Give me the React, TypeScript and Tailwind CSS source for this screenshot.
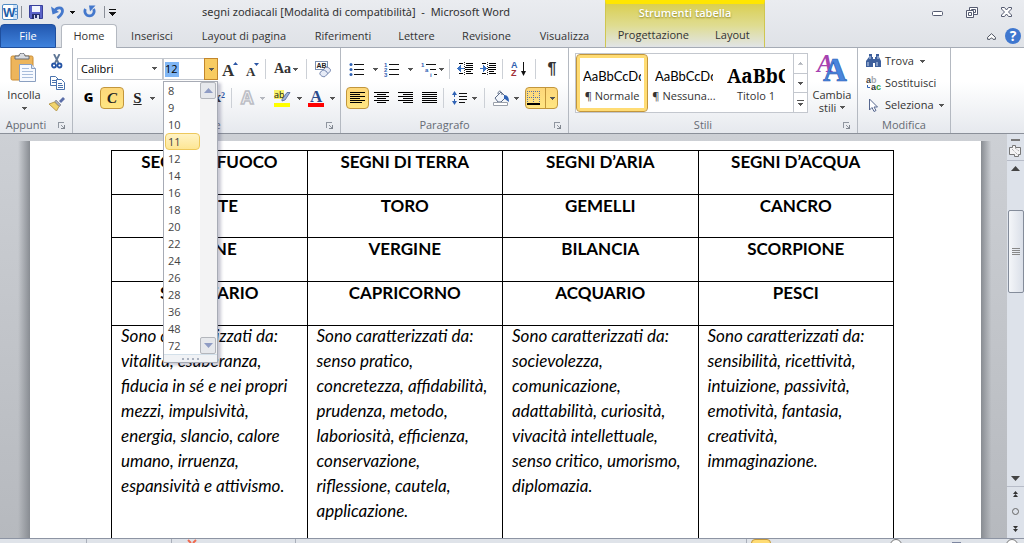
import type { ReactNode } from 'react';

const fileTabs = [
  { label: 'Inserisci', width: 'w-[70px]' },
  { label: 'Layout di pagina', width: 'w-[114px]' },
  { label: 'Riferimenti', width: 'w-[84px]' },
  { label: 'Lettere', width: 'w-[63px]' },
  { label: 'Revisione', width: 'w-[77px]' },
  { label: 'Visualizza', width: 'w-[79px]' },
];

const sizes = [8, 9, 10, 11, 12, 14, 16, 18, 20, 22, 24, 26, 28, 36, 48, 72];

const signRows = [
  { height: 'h-[44px]', cells: ['SEGNI DI FUOCO', 'SEGNI DI TERRA', 'SEGNI D’ARIA', 'SEGNI D’ACQUA'] },
  { height: 'h-[43px]', cells: ['ARIETE', 'TORO', 'GEMELLI', 'CANCRO'] },
  { height: 'h-[44px]', cells: ['LEONE', 'VERGINE', 'BILANCIA', 'SCORPIONE'] },
  { height: 'h-[44px]', cells: ['SAGITTARIO', 'CAPRICORNO', 'ACQUARIO', 'PESCI'] },
];

const traits = [
  ['Sono caratterizzati da:', 'vitalità, esuberanza,', 'fiducia in sé e nei propri', 'mezzi, impulsività,', 'energia, slancio, calore', 'umano, irruenza,', 'espansività e attivismo.'],
  ['Sono caratterizzati da:', 'senso pratico,', 'concretezza, affidabilità,', 'prudenza, metodo,', 'laboriosità, efficienza,', 'conservazione,', 'riflessione, cautela,', 'applicazione.'],
  ['Sono caratterizzati da:', 'socievolezza,', 'comunicazione,', 'adattabilità, curiosità,', 'vivacità intellettuale,', 'senso critico, umorismo,', 'diplomazia.'],
  ['Sono caratterizzati da:', 'sensibilità, ricettività,', 'intuizione, passività,', 'emotività, fantasia,', 'creatività,', 'immaginazione.'],
];

function Caret({ color = '#555' }: { color?: string }) {
  return (
    <svg width="5" height="3" viewBox="0 0 5 3" className="shrink-0" shapeRendering="crispEdges">
      <path d="M0 0h5v1h-1v1h-1v1h-1v-1h-1v-1h-1z" fill={color} />
    </svg>
  );
}

function Divider() {
  return <span className="h-5 w-px shrink-0 bg-[#ccd0d6]" />;
}

function Tool({ label, width, active, children }: { label: string; width: string; active?: boolean; children?: ReactNode }) {
  return (
    <button
      aria-label={label}
      className={`flex h-[22px] shrink-0 items-center justify-center gap-2 rounded-sm ${width} ${
        active ? 'border border-[#c2963c] bg-linear-to-b from-[#fdd77a] to-[#ffe682]' : ''
      }`}
    >
      {children}
    </button>
  );
}

function Group({ title, width, launcher = true, children }: { title: string; width: string; launcher?: boolean; children: ReactNode }) {
  return (
    <section className={`flex shrink-0 flex-col border-r border-[#b4b9c1] ${width}`}>
      <div className="h-[69px]">{children}</div>
      <div className={`relative h-4 text-center leading-4 text-[#666b74] ${launcher ? 'pr-5' : ''}`}>
        {title}
        {launcher && (
          <button aria-label={`Opzioni ${title}`} className="absolute top-[5px] right-[6px]">
            <svg width="8" height="8" viewBox="0 0 8 8" shapeRendering="crispEdges">
              <path d="M0.5 6V0.5H6M3 3l3 3" fill="none" stroke="#9096a0" />
              <path d="M7 3v4H3V6h3V3z" fill="#80868f" />
            </svg>
          </button>
        )}
      </div>
    </section>
  );
}

function Lines({ rows }: { rows: [number, number][] }) {
  return (
    <svg width="15" height="14" viewBox="0 0 15 14" shapeRendering="crispEdges">
      {rows.map(([x, w], i) => (
        <rect key={i} x={x} y={1 + i * 2} width={w} height="1" fill="#000" />
      ))}
    </svg>
  );
}

function Indent({ right }: { right?: boolean }) {
  return (
    <svg width="17" height="14" viewBox="0 0 17 14" shapeRendering="crispEdges">
      <path d="M7.500 0v14" stroke="#333" strokeDasharray="1 1" />
      <path d="M2 1.500h4M9 1.500h7M9 3.500h7M8 5.500h8M8 7.500h8M9 9.500h5M2 11.500h4M9 11.500h7" stroke="#000" fill="none" />
      <path d={right ? 'M0 6h3V3l4 3.500L3 10V7H0z' : 'M7 6H4V3L0 6.500 4 10V7h3z'} fill="#3c73c4" />
    </svg>
  );
}

function WordLogo() {
  return (
    <svg width="16" height="17" viewBox="0 0 16 17" className="shrink-0">
      <rect x="0.500" y="0.500" width="15" height="15" rx="1.500" fill="#fff" stroke="#4f8ac4" />
      <path d="M11 1h4v14h-4z" fill="#cfe2f6" />
      <path d="M13 4.500h2M13 7.500h2M13 10.500h2" stroke="#5d8fcd" />
      <text x="1" y="13" fontSize="13" fontWeight="bold" fill="#1f5ea8" fontFamily="Liberation Sans, sans-serif">W</text>
    </svg>
  );
}

function TitleBar() {
  return (
    <div className="flex h-6 shrink-0 items-center">
      <div className="flex w-[202px] shrink-0 items-center pl-[2px]">
        <WordLogo />
        <span className="ml-[3px] h-3 w-px bg-[#8a8f98]" />
        <button aria-label="Salva" className="ml-[7px]">
          <svg width="14" height="14" viewBox="0 0 14 14">
            <path d="M0.500 0.500h13v13h-12l-1-1z" fill="#5a63c8" stroke="#38409a" />
            <path d="M3 1h8v6H3z" fill="#f2f6fd" />
            <path d="M3 9h8v5H3z" fill="#26306c" />
            <path d="M5 10h5v4H5z" fill="#d6dcf0" />
            <path d="M6 10h2v3H6z" fill="#26306c" />
          </svg>
        </button>
        <button aria-label="Annulla" className="ml-2 flex items-center gap-[6px]">
          <svg width="13" height="14" viewBox="0 0 13 14">
            <path d="M4 5.500c2-3.500 7.500-3.500 7.500 0.500 0 3-2 4.500-5 7" fill="none" stroke="#4478cc" strokeWidth="2.800" />
            <path d="M0 1.500l1.500 8L8 7z" fill="#4478cc" />
          </svg>
          <Caret color="#111" />
        </button>
        <button aria-label="Ripeti" className="ml-2">
          <svg width="13" height="14" viewBox="0 0 13 14">
            <path d="M2.500 4a4.600 4.600 0 1 0 8 0" fill="none" stroke="#4478cc" strokeWidth="2.800" />
            <path d="M6 0.500l6.500 0L7 6.500z" fill="#4478cc" />
          </svg>
        </button>
        <span className="ml-2 h-3 w-px bg-[#8a8f98]" />
        <button aria-label="Personalizza" className="ml-1">
          <svg width="7" height="7" viewBox="0 0 7 7" shapeRendering="crispEdges">
            <path d="M0 0h7v1H0zM0 3h7L3.500 7z" fill="#111" />
          </svg>
        </button>
      </div>
      <h1 className="font-['Noto_Sans',sans-serif] whitespace-pre text-[#333]">segni zodiacali [Modalità di compatibilità]  -  Microsoft Word</h1>
    </div>
  );
}

function Header() {
  return (
    <header className="flex h-12 shrink-0 bg-linear-to-b from-[#eaecf0] to-[#dfe2e7] shadow-[inset_0_-1px_0_#a5abb5]">
      <div className="flex w-[605px] shrink-0 flex-col">
        <TitleBar />
        <nav className="flex h-6 items-stretch text-[#333]">
          <button className="mr-[5px] w-14 rounded-t-sm border border-[#1f4f9e] bg-linear-to-b from-[#2358b0] to-[#3f82dc] text-white">File</button>
          <button className="w-[56px] rounded-t-sm border border-b-0 border-[#b4b9c1] bg-white">Home</button>
          {fileTabs.map((tab) => (
            <button key={tab.label} className={`shrink-0 whitespace-nowrap ${tab.width}`}>
              {tab.label}
            </button>
          ))}
        </nav>
      </div>
      <div className="flex w-40 shrink-0 flex-col border-x border-t-4 border-b border-x-[#cfc650] border-t-[#ffe600] border-b-[#a5abb5] bg-linear-to-b from-[#dacf4e] via-[#dfdc90] to-[#e1e4e6]">
        <div className="h-5 shrink-0 text-center leading-[18px] font-semibold text-white [text-shadow:0_1px_2px_#8a8320]">Strumenti tabella</div>
        <nav className="flex flex-1 text-[#333]">
          <button className="w-[96px]">Progettazione</button>
          <button className="w-[64px]">Layout</button>
        </nav>
      </div>
      <div className="flex flex-1 flex-col items-end">
        <div className="flex h-6 items-center gap-[23px] pr-3">
          <button aria-label="Riduci a icona">
            <svg width="11" height="10" viewBox="0 0 11 10"><rect x="0.500" y="4.500" width="10" height="4" rx="1" fill="#fff" stroke="#555b70" /></svg>
          </button>
          <button aria-label="Ripristina">
            <svg width="12" height="11" viewBox="0 0 12 11" fill="#fff" stroke="#555b70">
              <path d="M3.500 0.500h8v7h-8z" />
              <path d="M5.500 2.500h4v3h-4z" />
              <path d="M0.500 3.500h7v7h-7z" />
              <path d="M2.500 5.500h3v3h-3z" />
            </svg>
          </button>
          <button aria-label="Chiudi">
            <svg width="11" height="10" viewBox="0 0 11 10">
              <path d="M0.500 0.500h3l2 2.500 2-2.500h3v1.500L7.500 5l3 3v1.500h-3l-2-2.500-2 2.500h-3V8l3-3-3-3z" fill="#fff" stroke="#555b70" />
            </svg>
          </button>
        </div>
        <div className="flex h-6 items-center gap-[9px] pr-[3px]">
          <button aria-label="Riduci barra multifunzione">
            <svg width="9" height="7" viewBox="0 0 9 7">
              <path d="M4.500 0.700L8.400 4.300v2H6L4.500 4.700 3 6.300H0.600v-2z" fill="#fff" stroke="#4c5260" />
            </svg>
          </button>
          <button aria-label="Guida" className="size-4 rounded-full bg-[#3f77cf] text-center text-sm leading-4 font-bold text-white">?</button>
        </div>
      </div>
    </header>
  );
}

function Clipboard() {
  return (
    <div className="flex h-full">
      <button className="flex w-[48px] flex-col items-center justify-start pt-[5px]">
        <svg width="28" height="30" viewBox="0 0 28 30" className="shrink-0">
          <rect x="1" y="3" width="22" height="24" rx="1.500" fill="#edb55b" stroke="#c98c35" />
          <path d="M5 6V3h4c0-4 6-4 6 0h4v3z" fill="#d9dce1" stroke="#676b73" />
          <path d="M9.500 11.500h12l4 4v13h-16z" fill="#f7faff" stroke="#8a9fc0" />
          <path d="M21.500 11.500v4h4" fill="#dbe7f6" stroke="#8a9fc0" />
          <path d="M12 15.500h7M12 18.500h11M12 21.500h11M12 24.500h11" stroke="#a9bddb" />
        </svg>
        <span className="mt-[5px] leading-[14px]">Incolla</span>
        <span className="mt-[5px]"><Caret /></span>
      </button>
      <div className="flex w-[18px] flex-col items-center gap-[7px] pt-[6px]">
        <button aria-label="Taglia">
          <svg width="12" height="15" viewBox="0 0 12 15" fill="none">
            <path d="M3 0l4.500 9M8.500 0L4 9" stroke="#5f7796" strokeWidth="1.800" />
            <circle cx="3" cy="11.500" r="2" stroke="#2453a4" strokeWidth="1.800" />
            <circle cx="8.500" cy="11.500" r="2" stroke="#2453a4" strokeWidth="1.800" />
          </svg>
        </button>
        <button aria-label="Copia">
          <svg width="15" height="14" viewBox="0 0 15 14" fill="#fff" stroke="#4a73ae">
            <path d="M0.500 0.500h5l3 3v6h-8z" />
            <path d="M2 4.500h4M2 6.500h4" />
            <path d="M6.500 3.500h5l3 3v7h-8z" />
            <path d="M8 7.500h4M8 9.500h5M8 11.500h5" />
          </svg>
        </button>
        <button aria-label="Copia formato">
          <svg width="16" height="14" viewBox="0 0 16 14">
            <path d="M10 4l4-4 2 2-4 4z" fill="#5b6ea8" />
            <path d="M7 3l5 5-2 1.500L5.500 5z" fill="#a9adb8" stroke="#5e6370" strokeWidth="0.500" />
            <path d="M0 7l5.500-2L10 9.500 7.500 14z" fill="#f1d56e" stroke="#a3802a" strokeWidth="0.700" />
          </svg>
        </button>
      </div>
    </div>
  );
}

function SizeMenu() {
  return (
    <div className="absolute top-[22px] -left-px z-10 w-[55px] border border-[#a7abb5] bg-white shadow-[3px_2px_3px_rgba(70,70,110,0.3)]">
      <div className="flex">
        <ul className="flex-1 pl-px" role="listbox" aria-label="Dimensioni">
          {sizes.map((size) => (
            <li
              key={size}
              role="option"
              aria-selected={size === 11}
              className={`h-[17px] rounded-sm border pl-0.5 leading-[15px] text-[#444] ${
                size === 11 ? 'border-[#edc85c] bg-linear-to-b from-[#fff3c4] to-[#fde694]' : 'border-transparent'
              }`}
            >
              {size}
            </li>
          ))}
        </ul>
        <div className="flex w-[17px] flex-col justify-between bg-[#f3f3f4]">
          <button aria-label="Su" className="flex h-[17px] w-4 items-center justify-center rounded-xs border border-[#b3b6bc] bg-[#e6e8ec]">
            <svg width="9" height="5" viewBox="0 0 9 5"><path d="M0 5l4.500-5L9 5z" fill="#8f9cc4" /></svg>
          </button>
          <button aria-label="Giù" className="flex h-[17px] w-4 items-center justify-center rounded-xs border border-[#b3b6bc] bg-[#e6e8ec]">
            <svg width="9" height="5" viewBox="0 0 9 5"><path d="M0 0h9L4.500 5z" fill="#8f9cc4" /></svg>
          </button>
        </div>
      </div>
      <div className="flex h-2 items-center justify-center gap-[3px] border-t border-[#d3e0ea] bg-[#f0f2f5]">
        <i className="size-0.5 bg-[#a9b0be]" />
        <i className="size-0.5 bg-[#a9b0be]" />
        <i className="size-0.5 bg-[#a9b0be]" />
        <i className="size-0.5 bg-[#a9b0be]" />
      </div>
    </div>
  );
}

function FontTools() {
  return (
    <div className="flex flex-col gap-[7px] pt-[10px] pl-1">
      <div className="flex h-[22px] items-center">
        <div className="relative h-[22px] w-[86px] shrink-0">
          <select aria-label="Tipo di carattere" className="h-full w-full appearance-none border border-[#c3c7ce] bg-white pl-[3px] text-black">
            <option>Calibri</option>
          </select>
          <span className="pointer-events-none absolute top-[9px] right-[6px]"><Caret /></span>
        </div>
        <div className="relative flex h-[22px] w-[55px] shrink-0 items-center border border-[#c3c7ce] bg-white pl-px">
          <input aria-label="Dimensione carattere" defaultValue="12" className="h-[15px] w-[14px] bg-[#7fb6f5] text-black outline-none" />
          <button aria-label="Apri dimensioni" className="absolute -top-px -right-px flex h-[22px] w-[14px] items-center justify-center border border-[#c2862c] bg-[#f8cb61]">
            <Caret />
          </button>
          <SizeMenu />
        </div>
        <Tool label="Ingrandisci carattere" width="w-[24px]">
          <svg width="16" height="15" viewBox="0 0 16 15" className="overflow-visible">
            <text x="0" y="14" fontSize="17" fontWeight="bold" fill="#333" fontFamily="Liberation Serif, serif">A</text>
            <path d="M11 3l2.500-3L16 3z" fill="#2a55a5" />
          </svg>
        </Tool>
        <Tool label="Riduci carattere" width="w-[22px]">
          <svg width="14" height="15" viewBox="0 0 14 15" className="overflow-visible">
            <text x="0" y="14" fontSize="13" fontWeight="bold" fill="#333" fontFamily="Liberation Serif, serif">A</text>
            <path d="M8 1h5l-2.500 3z" fill="#2a55a5" />
          </svg>
        </Tool>
        <span className="w-1" />
        <Divider />
        <Tool label="Maiuscole/minuscole" width="w-[40px]">
          <span className="-mr-1.5 font-['Liberation_Serif',serif] text-sm font-bold text-[#333]">Aa</span>
          <Caret />
        </Tool>
        <Divider />
        <Tool label="Cancella formattazione" width="w-[33px]">
          <svg width="17" height="16" viewBox="0 0 17 16" className="overflow-visible">
            <rect x="0.500" y="0.500" width="12" height="8" fill="#fff" stroke="#7c8fae" />
            <text x="1.500" y="7" fontSize="7" fontWeight="bold" fill="#222" fontFamily="Liberation Sans, sans-serif">AB</text>
            <path d="M5 11.500l5.500-5c2-1 6.500 1.500 4.500 4l-5 5c-2 1-6-1.500-5-4z" fill="#e7ecf7" stroke="#6d80ab" />
            <path d="M8 9c2 0 4 1.500 4.500 3.500" fill="none" stroke="#6d80ab" />
          </svg>
        </Tool>
      </div>
      <div className="flex h-[22px] items-center text-[#222]">
        <Tool label="Grassetto" width="w-[23px]"><b className="text-[13px] font-extrabold text-black">G</b></Tool>
        <Tool label="Corsivo" width="w-[24px]" active>
          <span className="font-['Liberation_Serif',serif] text-[15px] font-bold italic">C</span>
        </Tool>
        <Tool label="Sottolineato" width="w-[40px]">
          <span className="font-['Liberation_Serif',serif] text-[15px] font-bold underline">S</span>
          <Caret />
        </Tool>
        <Tool label="Barrato" width="w-[22px]" />
        <Tool label="Pedice" width="w-[22px]" />
        <Tool label="Apice" width="w-[23px]">
          <span className="font-['Liberation_Serif',serif] text-sm font-bold whitespace-nowrap">
            x<sup className="text-[8px] text-[#2a55a5]">2</sup>
          </span>
        </Tool>
        <Divider />
        <Tool label="Effetti testo" width="w-[40px]">
          <svg width="16" height="16" viewBox="0 0 16 16" className="-mr-1 shrink-0 overflow-visible">
            <text x="1" y="14" fontSize="18" fontWeight="bold" fill="#f5f5f7" stroke="#bcbec5" strokeWidth="1.500" fontFamily="Open Sans, sans-serif">A</text>
          </svg>
          <Caret color="#b5b8bf" />
        </Tool>
        <Tool label="Evidenziatore" width="w-[31px]">
          <svg width="17" height="17" viewBox="0 0 17 17" className="-mr-0.5 shrink-0 overflow-visible">
            <path d="M0 0h10v9H0z" fill="#f8f36b" />
            <text x="0" y="8" fontSize="9" fill="#111" fontFamily="Open Sans, sans-serif">ab</text>
            <path d="M8 9.500L13 2.500h3L11 10l-3 1z" fill="#9fb4d8" stroke="#4d6595" strokeWidth="0.800" />
            <path d="M0 13h16v4H0z" fill="#ff0" />
          </svg>
          <Caret />
        </Tool>
        <Tool label="Colore carattere" width="w-[36px]">
          <svg width="16" height="17" viewBox="0 0 16 17" className="-mr-0.5 shrink-0 overflow-visible">
            <text x="2" y="12" fontSize="17" fontWeight="bold" fill="#2c4c8c" fontFamily="Liberation Serif, serif">A</text>
            <path d="M0 13h16v4H0z" fill="#f00" />
          </svg>
          <Caret />
        </Tool>
      </div>
    </div>
  );
}

function ListIcon({ kind }: { kind: 'bullets' | 'numbers' | 'levels' }) {
  return (
    <svg width="16" height="15" viewBox="0 0 16 15" className="shrink-0 overflow-visible">
      {kind === 'levels' ? (
        <path d="M5 2.500h10M9 7.500h6M13 12.500h3" stroke="#111" shapeRendering="crispEdges" />
      ) : (
        <path d="M5 2.500h10M5 7.500h10M5 12.500h10" stroke="#111" shapeRendering="crispEdges" />
      )}
      {kind === 'bullets' && (
        <g fill="#2f62b5">
          <circle cx="2" cy="2.500" r="1.500" />
          <circle cx="2" cy="7.500" r="1.500" />
          <circle cx="2" cy="12.500" r="1.500" />
        </g>
      )}
      {kind !== 'bullets' && (
        <g fill="#2f62b5" fontSize="6" fontWeight="bold" fontFamily="Liberation Sans, sans-serif">
          <text x="0" y="5">1</text>
          <text x={kind === 'levels' ? 4 : 0} y="10">{kind === 'levels' ? 'a' : '2'}</text>
          <text x={kind === 'levels' ? 9 : 0} y="15">{kind === 'levels' ? 'i' : '3'}</text>
        </g>
      )}
    </svg>
  );
}

function ParagraphTools() {
  const full: [number, number] = [0, 15];
  return (
    <div className="flex flex-col gap-[7px] pt-[10px] pl-[5px]">
      <div className="flex h-[22px] items-center">
        <Tool label="Elenchi puntati" width="w-[35px]"><ListIcon kind="bullets" /><Caret /></Tool>
        <Tool label="Elenchi numerati" width="w-[35px]"><ListIcon kind="numbers" /><Caret /></Tool>
        <Tool label="Elenco a più livelli" width="w-[32px]"><ListIcon kind="levels" /><span className="-ml-1.5 flex"><Caret /></span></Tool>
        <span className="w-px" />
        <Divider />
        <span className="w-[5px]" />
        <Tool label="Riduci rientro" width="w-[24px]"><Indent /></Tool>
        <Tool label="Aumenta rientro" width="w-[22px]"><Indent right /></Tool>
        <span className="w-[3px]" />
        <Divider />
        <Tool label="Ordina" width="w-[32px]">
          <svg width="16" height="16" viewBox="0 0 16 16" className="overflow-visible">
            <g fontSize="9" fontWeight="bold" fontFamily="Liberation Sans, sans-serif">
              <text x="0" y="7" fill="#2f5fb0">A</text>
              <text x="0" y="15" fill="#a03038">Z</text>
            </g>
            <path d="M12.500 1v12" stroke="#111" />
            <path d="M10 10h5l-2.500 5z" fill="#111" />
          </svg>
        </Tool>
        <Divider />
        <Tool label="Mostra tutto" width="w-[32px]">
          <span className="font-['Liberation_Sans',sans-serif] text-base font-bold text-[#333]">¶</span>
        </Tool>
      </div>
      <div className="flex h-[22px] items-center">
        <Tool label="Allinea a sinistra" width="w-[23px]" active><Lines rows={[full, [0, 10], full, [0, 10], full, [0, 12]]} /></Tool>
        <Tool label="Centra" width="w-[24px]"><Lines rows={[full, [3, 9], full, [3, 9], full, [3, 9]]} /></Tool>
        <Tool label="Allinea a destra" width="w-[24px]"><Lines rows={[full, [5, 10], full, [5, 10], full, [5, 10]]} /></Tool>
        <Tool label="Giustifica" width="w-[24px]"><Lines rows={[full, full, full, full, full, full]} /></Tool>
        <span className="w-0.5" />
        <Divider />
        <Tool label="Interlinea" width="w-[40px]">
          <svg width="16" height="16" viewBox="0 0 16 16" className="-mr-1 shrink-0">
            <path d="M2.500 3v10" stroke="#2f62b5" strokeDasharray="4 2" />
            <path d="M0 5l2.500-4L5 5zM0 11h5l-2.500 4z" fill="#2f62b5" />
            <path d="M7 3.500h8M7 6.500h8M7 9.500h8M7 12.500h6" stroke="#111" shapeRendering="crispEdges" />
          </svg>
          <Caret />
        </Tool>
        <Divider />
        <Tool label="Sfondo" width="w-[40px]">
          <svg width="18" height="16" viewBox="0 0 18 16" className="-mr-1 shrink-0">
            <path d="M3 8l6-6 5 5-5 5H6z" fill="#f1f5fb" stroke="#5a6a86" />
            <path d="M6 4c0-4 4-4 4 1" fill="none" stroke="#5a6a86" />
            <path d="M12 5c4 0 5 3 5 7-2-1-3-3-5-3z" fill="#2f62b5" />
            <path d="M1.500 12.500h14v3h-14z" fill="#fff" stroke="#9aa0aa" />
          </svg>
          <Caret />
        </Tool>
        <Tool label="Bordi" width="w-[33px]" active>
          <svg width="14" height="14" viewBox="0 0 14 14" className="-ml-px shrink-0" shapeRendering="crispEdges">
            <path d="M0.500 0v12M6.500 0v12M12.500 0v12M0 0.500h13M0 6.500h13" stroke="#5a73a5" strokeDasharray="1 1" />
            <path d="M0 12h13v1.500H0z" fill="#000" />
          </svg>
          <span className="-ml-1 flex h-full items-center border-l border-[#c2963c] pl-1"><Caret /></span>
        </Tool>
      </div>
    </div>
  );
}

function StyleGallery() {
  return (
    <div className="flex pt-[5px] pl-[6px]">
      <div className="flex h-[60px] w-[233px] shrink-0 border border-[#c3c7ce] bg-white">
        <button className="flex h-full w-[72px] flex-col items-center justify-start rounded-sm border border-[#c2963c] bg-white pt-[11px] inset-ring-3 inset-ring-[#ffdc74]">
          <span className="w-[58px] overflow-hidden text-left font-['Lato',sans-serif] text-[13px] leading-5 text-black">AaBbCcDc</span>
          <span className="mt-0.5 leading-4">¶ Normale</span>
        </button>
        <button className="flex w-[72px] flex-col items-center justify-start pt-[12px]">
          <span className="w-[58px] overflow-hidden text-left font-['Lato',sans-serif] text-[13px] leading-5 text-black">AaBbCcDc</span>
          <span className="mt-0.5 leading-4 whitespace-nowrap">¶ Nessuna...</span>
        </button>
        <button className="flex w-[72px] flex-col items-center justify-start pt-[12px]">
          <span className="w-[58px] overflow-hidden text-left font-['Noto_Serif','Liberation_Serif',serif] text-[19px] leading-5 font-bold text-black">AaBbC</span>
          <span className="mt-0.5 leading-4">Titolo 1</span>
        </button>
        <div className="ml-auto flex w-[14px] flex-col border-l border-[#c3c7ce]">
          <button aria-label="Riga precedente" className="flex flex-1 rotate-180 items-center justify-center"><Caret color="#b0b4bb" /></button>
          <button aria-label="Riga successiva" className="flex flex-1 items-center justify-center border-y border-[#c3c7ce]"><Caret /></button>
          <button aria-label="Altro" className="flex flex-1 flex-col items-center justify-center gap-0.5">
            <span className="h-px w-[7px] bg-[#555]" />
            <Caret />
          </button>
        </div>
      </div>
      <button className="flex w-[48px] flex-col items-center">
        <svg width="30" height="29" viewBox="0 0 30 29" className="mt-px shrink-0 overflow-visible">
          <text x="0" y="18" fontSize="25" fontStyle="italic" fontWeight="bold" fill="#a642b0" fontFamily="Liberation Serif, serif">A</text>
          <text x="6" y="27" fontSize="33" fill="#4a86dd" stroke="#2d62b8" strokeWidth="0.700" fontWeight="bold" fontFamily="Liberation Serif, serif">A</text>
        </svg>
        <span className="mt-[5px] leading-[13px]">Cambia</span>
        <span className="flex items-center gap-1 leading-[13px]">stili <Caret /></span>
      </button>
    </div>
  );
}

function EditTools() {
  return (
    <div className="flex flex-col pt-0.5 pl-2">
      <button className="flex h-[22px] items-center">
        <svg width="16" height="14" viewBox="0 0 16 14" className="mr-[3px]">
          <path d="M3 0h3v3h1V5h2V3h1V0h3v3l2 4v6H9V9H7v4H0V7l3-4z" fill="#3d5f9c" />
          <path d="M2 8v4M11 8v4M4 2v3M12 2v3" stroke="#c9d8f0" />
        </svg>
        Trova
        <span className="ml-[6px]"><Caret /></span>
      </button>
      <button className="flex h-[22px] items-center">
        <svg width="16" height="15" viewBox="0 0 16 15" className="mr-[3px] overflow-visible">
          <g fontSize="9" fontWeight="bold" fontFamily="Liberation Sans, sans-serif">
            <text x="0" y="7" fill="#444">a</text>
            <text x="5" y="7" fill="#a5a8ae">b</text>
            <text x="5" y="14" fill="#333">a</text>
            <text x="10" y="14" fill="#2c9a3a">c</text>
          </g>
          <path d="M1.500 9v2.500H4" fill="none" stroke="#2f62b5" />
        </svg>
        Sostituisci
      </button>
      <button className="flex h-[22px] items-center">
        <svg width="16" height="15" viewBox="0 0 16 15" className="mr-[3px]">
          <path d="M3.500 1v11l2.500-2.500 2 4 2-1-2-3.500h3.500z" fill="#fff" stroke="#56678f" />
        </svg>
        Seleziona
        <span className="ml-[5px]"><Caret /></span>
      </button>
    </div>
  );
}

function Ribbon() {
  return (
    <div className="flex h-[86px] shrink-0 border-b border-[#8b9099] bg-linear-to-b from-white from-40% to-[#e6e9ee] text-[#333]">
      <Group title="Appunti" width="w-[73px]"><Clipboard /></Group>
      <Group title="Carattere" width="w-[268px]"><FontTools /></Group>
      <Group title="Paragrafo" width="w-[228px]"><ParagraphTools /></Group>
      <Group title="Stili" width="w-[289px]"><StyleGallery /></Group>
      <Group title="Modifica" width="w-[93px]" launcher={false}><EditTools /></Group>
    </div>
  );
}

function SignsTable() {
  return (
    <table className="w-[783px] table-fixed border-collapse font-['Lato',sans-serif] text-black">
      <thead>
        {signRows.map((row) => (
          <tr key={row.cells[0]} className={row.height}>
            {row.cells.map((cell) => (
              <th key={cell} className="border border-black p-0 align-top text-[17px] leading-[22px] font-bold">
                {cell}
              </th>
            ))}
          </tr>
        ))}
      </thead>
      <tbody>
        <tr className="h-[260px]">
          {traits.map((lines) => (
            <td key={lines[1]} className="border border-black py-0 pr-0 pl-[9px] align-top text-[17px] leading-[25px] whitespace-nowrap italic">
              <div className="-mt-[3px]">
                {lines.map((line) => (
                  <p key={line}>{line}</p>
                ))}
              </div>
            </td>
          ))}
        </tr>
      </tbody>
    </table>
  );
}

function ScrollBar() {
  return (
    <aside className="flex w-[17px] shrink-0 flex-col items-center bg-[#dde2ea] pt-[5px]">
      <span className="h-0.5 w-[9px] shrink-0 bg-[#777]" />
      <button aria-label="Righello" className="mt-1">
        <svg width="13" height="13" viewBox="0 0 13 13">
          <path d="M0.500 2.500h3v-2h3v2h5v7h-2v2h-4v-2h-5z" fill="#f4f4f5" stroke="#777" />
          <path d="M3 4l6 6M6 3l4 3" stroke="#999" strokeDasharray="1 1" />
        </svg>
      </button>
      <span className="mt-0.5 h-px w-full shrink-0 bg-[#b7bcc8]" />
      <button aria-label="Scorri su" className="mt-[5px]">
        <svg width="9" height="5" viewBox="0 0 9 5"><path d="M0 5l4.500-5L9 5z" fill="#444" /></svg>
      </button>
      <div className="mt-[39px] flex h-[83px] w-4 shrink-0 flex-col items-center justify-center gap-px rounded-xs border border-[#848c9a] bg-linear-to-r from-[#f4f6f9] to-[#dadfe8]">
        <i className="h-px w-2 bg-[#888]" />
        <i className="h-px w-2 bg-[#888]" />
        <i className="h-px w-2 bg-[#888]" />
        <i className="h-px w-2 bg-[#888]" />
      </div>
      <button aria-label="Scorri giù" className="mt-auto">
        <svg width="9" height="5" viewBox="0 0 9 5"><path d="M0 0h9L4.500 5z" fill="#444" /></svg>
      </button>
      <div className="mt-[5px] flex h-[52px] w-full shrink-0 flex-col items-center justify-between border-t border-[#b7bcc8] pt-1 pb-[6px]">
        <button aria-label="Pagina precedente">
          <svg width="5" height="6" viewBox="0 0 5 6"><path d="M0 3l2.500-3L5 3zM0 6l2.500-3L5 6z" fill="#333" /></svg>
        </button>
        <button aria-label="Seleziona oggetto" className="size-[7px] rounded-full border border-[#666]" />
        <button aria-label="Pagina successiva">
          <svg width="5" height="6" viewBox="0 0 5 6"><path d="M0 0h5L2.500 3zM0 3h5L2.500 6z" fill="#333" /></svg>
        </button>
      </div>
    </aside>
  );
}

function StatusBar() {
  return (
    <footer className="flex h-[5px] shrink-0 overflow-hidden border-t border-[#8d94a3] bg-[#dfe3e9]">
      <span className="w-[87px] border-r border-[#a9afba]" />
      <span className="w-[85px] border-r border-[#a9afba]" />
      <span className="w-[124px] border-r border-[#a9afba] pl-[15px]">
        <svg width="10" height="4" viewBox="0 0 10 4"><path d="M1 1l3 3M9 1L6 4" stroke="#ef6a50" strokeWidth="2" /></svg>
      </span>
      <span className="ml-auto w-px bg-[#a9afba]" />
      <span className="ml-1 h-5 w-5 rounded-sm border border-[#c2963c] bg-[#ffdc74]" />
      <span className="ml-[119px] size-3 shrink-0 rounded-full border border-[#777] bg-white" />
      <span className="mt-[3px] ml-[50px] h-1 w-[9px] bg-[#7d86a0]" />
      <span className="mr-[6px] ml-[45px] size-3 shrink-0 rounded-full border border-[#777] bg-white" />
    </footer>
  );
}

export default function App() {
  return (
    <div className="flex h-screen flex-col overflow-hidden bg-[#c4c8cd] font-['Open_Sans','Noto_Sans',sans-serif] text-[11px]">
      <Header />
      <Ribbon />
      <main className="flex min-h-0 flex-1 bg-linear-to-b from-[#cdd0d5] to-[#b6b9be]">
        <div className="mt-[7px] w-[30px] shrink-0 bg-linear-to-r from-transparent from-60% to-[#888c92]" />
        <div className="mt-[7px] min-w-0 flex-1 overflow-hidden bg-white pt-[9px] pl-[81px]">
          <SignsTable />
        </div>
        <div className="mt-[7px] w-[26px] shrink-0 bg-linear-to-l from-transparent from-60% to-[#888c92]" />
        <ScrollBar />
      </main>
      <StatusBar />
    </div>
  );
}
